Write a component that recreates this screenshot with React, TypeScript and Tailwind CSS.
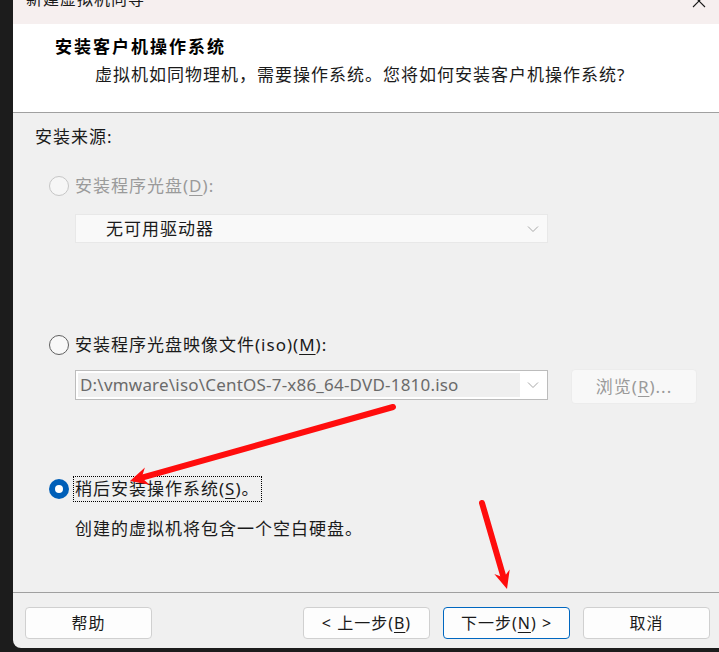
const font = { fontFamily: '"Noto Sans", "Noto Sans CJK SC", sans-serif' };

function Radio({ state }: { state: "disabled" | "off" | "on" }) {
  if (state === "on") {
    return (
      <span className="flex h-[20px] w-[20px] shrink-0 items-center justify-center rounded-full bg-[#005fb8]">
        <span className="h-[8px] w-[8px] rounded-full bg-white" />
      </span>
    );
  }
  return (
    <span
      className={
        state === "disabled"
          ? "h-[20px] w-[20px] shrink-0 rounded-full border border-[#c6c6c6] bg-[#f6f6f6]"
          : "h-[20px] w-[20px] shrink-0 rounded-full border border-[#606060] bg-[#f8f8f8]"
      }
    />
  );
}

function Chevron({ color = "#a8a8a8" }: { color?: string }) {
  return (
    <svg width="12" height="8" viewBox="0 0 12 8" fill="none">
      <path d="M1 1.5 L6 6.5 L11 1.5" stroke={color} strokeWidth="1" />
    </svg>
  );
}

function Btn({ children, primary }: { children: React.ReactNode; primary?: boolean }) {
  return (
    <button
      className={
        primary
          ? "flex h-[32px] w-[127px] items-center justify-center rounded-[4px] border border-[#0067c0] bg-[#fdfdfd] text-[16px] text-[#1a1a1a]"
          : "flex h-[32px] w-[127px] items-center justify-center rounded-[4px] border border-[#d0d0d0] bg-[#fdfdfd] text-[16px] text-[#1a1a1a]"
      }
    >
      {children}
    </button>
  );
}

function Arrows() {
  return (
    <svg className="pointer-events-none absolute left-0 top-0" width="719" height="652">
      <line x1="393" y1="407" x2="142" y2="477.7" stroke="#ff0d0d" strokeWidth="6" strokeLinecap="round" />
      <polygon points="130,481 149.7,484.8 141.6,477.7 144.9,467.4" fill="#ff0d0d" />
      <line x1="482" y1="503" x2="503.5" y2="577" stroke="#ff0d0d" strokeWidth="6" strokeLinecap="round" />
      <polygon points="507,589 509.7,569.5 503.7,577.5 494.3,573.9" fill="#ff0d0d" />
    </svg>
  );
}

export default function App() {
  return (
    <div className="relative flex h-[652px] w-[719px] bg-[#1c1c1c] tracking-[1px]" style={font}>
      <div className="w-[13px] shrink-0" />
      <div className="flex h-[648px] flex-1 flex-col overflow-hidden rounded-bl-[8px] bg-[#f0f0f0]">
        {/* title bar */}
        <div className="relative h-[24px] shrink-0 bg-[#f6efef]">
          <span className="absolute left-[13px] top-[-13px] text-[16px] leading-[24px] text-[#1a1a1a]">
            新建虚拟机向导
          </span>
          <svg className="absolute left-[679px] top-[-6px]" width="14" height="14" viewBox="0 0 14 14">
            <path d="M1 1 L13 13 M13 1 L1 13" stroke="#1a1a1a" strokeWidth="1.1" />
          </svg>
        </div>

        {/* header */}
        <div className="h-[89px] shrink-0 border-b border-[#a0a0a0] bg-white">
          <div className="ml-[42px] mt-[11px] text-[17px] font-bold leading-[24px] tracking-[2px] text-black">
            安装客户机操作系统
          </div>
          <div className="ml-[82px] mt-[4px] text-[17px] leading-[24px] text-[#1a1a1a]">
            虚拟机如同物理机，需要操作系统。您将如何安装客户机操作系统?
          </div>
        </div>

        {/* body */}
        <div className="flex flex-1 flex-col pl-[22px] text-[17px] leading-[24px] text-[#1a1a1a]">
          <div className="mt-[12px]">安装来源:</div>

          <div className="ml-[14px] mt-[25px] flex items-center gap-[6px] text-[#9a9a9a]">
            <Radio state="disabled" />
            <span>
              安装程序光盘(<span className="underline underline-offset-[3px]">D</span>):
            </span>
          </div>

          <div className="ml-[40px] mt-[16px] flex h-[29px] w-[473px] items-center justify-between border border-[#e8e8e8] bg-[#f9f9f9] pl-[30px] pr-[8px]">
            <span className="text-[#1a1a1a]">无可用驱动器</span>
            <Chevron />
          </div>

          <div className="ml-[14px] mt-[90px] flex items-center gap-[6px]">
            <Radio state="off" />
            <span>
              安装程序光盘映像文件(iso)(<span className="underline underline-offset-[3px]">M</span>):
            </span>
          </div>

          <div className="ml-[40px] mt-[12px] flex items-start">
            <div className="mt-[1px] flex h-[30px] w-[473px] items-center border border-[#bcbcbc] bg-white p-[2px]">
              <div className="flex h-full w-[442px] items-center bg-[#efefef] pl-[2px] text-[17px] tracking-[0.2px] text-[#6a6a6a]">
                D:\vmware\iso\CentOS-7-x86_64-DVD-1810.iso
              </div>
              <div className="flex flex-1 justify-center">
                <Chevron />
              </div>
            </div>
            <div className="ml-[23px] flex h-[35px] w-[126px] items-center justify-center rounded-[4px] border border-[#ececec] bg-[#f8f8f8] text-[#9a9a9a]">
              浏览(<span className="underline underline-offset-[3px]">R</span>)...
            </div>
          </div>

          <div className="ml-[14px] mt-[72px] flex items-center gap-[4px]">
            <Radio state="on" />
            <span className="border border-dotted border-black px-[1px]">
              稍后安装操作系统(<span className="underline underline-offset-[3px]">S</span>)。
            </span>
          </div>

          <div className="ml-[40px] mt-[15px]">创建的虚拟机将包含一个空白硬盘。</div>
        </div>

        {/* footer */}
        <div className="flex h-[56px] shrink-0 items-start border-t border-[#a0a0a0] pt-[14px] pl-[12px] pr-[9px]">
          <Btn>帮助</Btn>
          <div className="ml-auto flex gap-[13px]">
            <Btn>
              &lt; 上一步(<span className="underline underline-offset-[3px]">B</span>)
            </Btn>
            <Btn primary>
              下一步(<span className="underline underline-offset-[3px]">N</span>) &gt;
            </Btn>
            <Btn>取消</Btn>
          </div>
        </div>
      </div>
      <Arrows />
    </div>
  );
}
